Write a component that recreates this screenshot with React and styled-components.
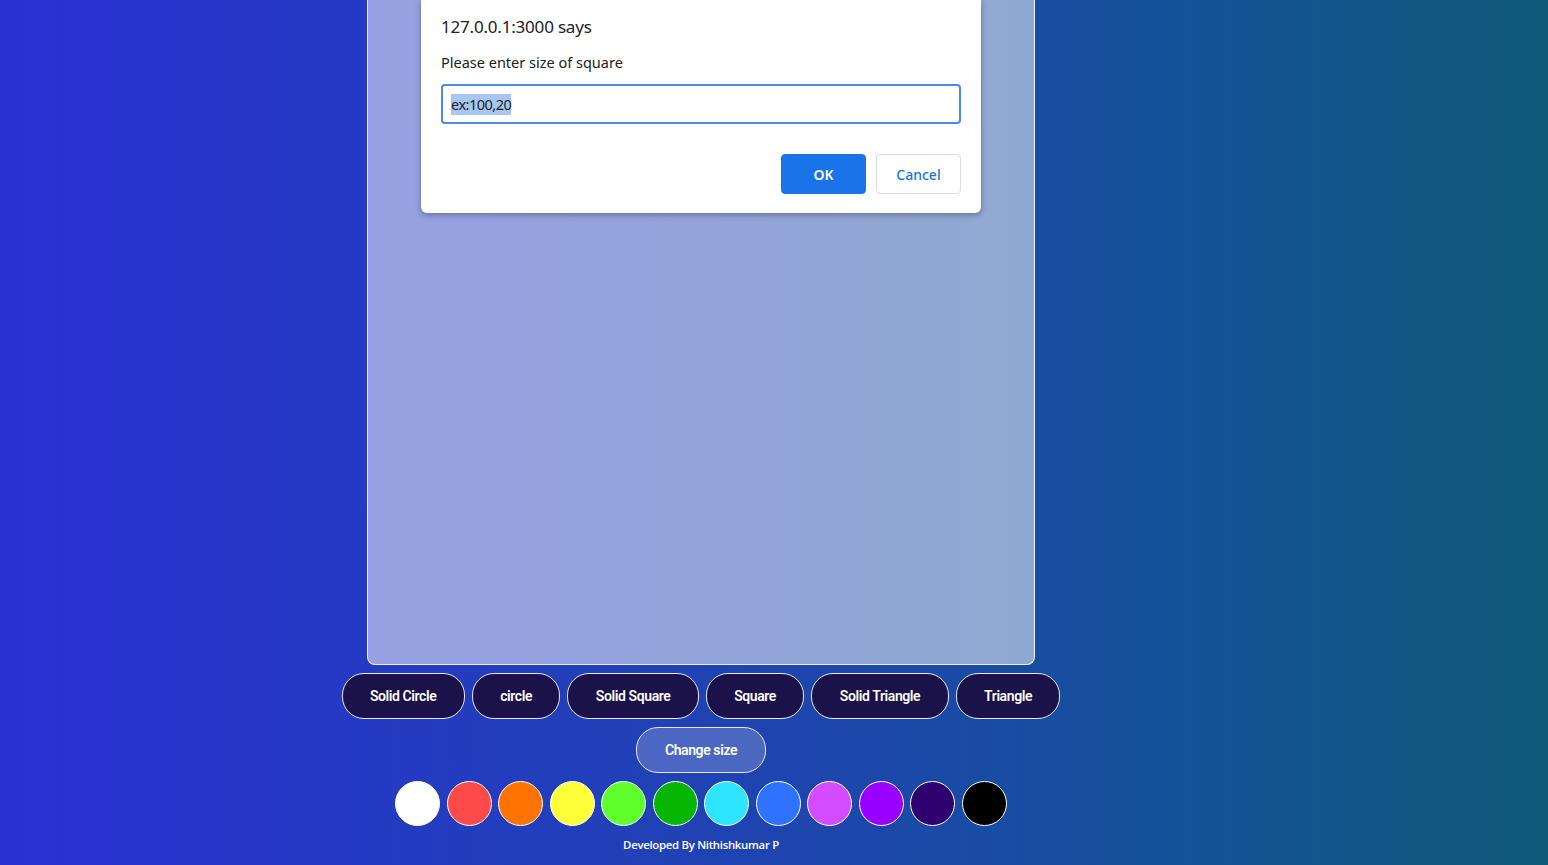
import React from "react"
import styled, { createGlobalStyle } from "styled-components"

const GlobalStyle = createGlobalStyle`
  html, body {
    margin: 0;
    padding: 0;
  }
  body {
    font-family: "Noto Sans", "Open Sans", sans-serif;
    overflow: hidden;
  }
`

const shapes = [
  "Solid Circle",
  "circle",
  "Solid Square",
  "Square",
  "Solid Triangle",
  "Triangle",
]

const colors = [
  "#ffffff",
  "#ff4a4a",
  "#ff7300",
  "#ffff3a",
  "#5fff2e",
  "#06b600",
  "#2de5ff",
  "#2f72ff",
  "#d44cff",
  "#9800ff",
  "#2f0070",
  "#000000",
]

const App = () => {
  return (
    <Page>
      <GlobalStyle />
      <Main>
        <Canvas />
        <ShapeRow>
          {shapes.map((s) => (
            <ShapeButton key={s}>{s}</ShapeButton>
          ))}
        </ShapeRow>
        <ShapeButton $ghost>Change size</ShapeButton>
        <Palette>
          {colors.map((c) => (
            <Swatch key={c} $color={c} />
          ))}
        </Palette>
        <Footer>Developed By Nithishkumar P</Footer>
      </Main>

      <Dialog>
        <DialogTitle>127.0.0.1:3000 says</DialogTitle>
        <DialogText>Please enter size of square</DialogText>
        <PromptInput>
          <Selected>ex:100,20</Selected>
        </PromptInput>
        <DialogActions>
          <DialogButton $primary>OK</DialogButton>
          <DialogButton>Cancel</DialogButton>
        </DialogActions>
      </Dialog>
    </Page>
  )
}

export default App

const Page = styled.div`
  position: relative;
  width: 100vw;
  height: 865px;
  background: linear-gradient(90deg, #2a31d4 0%, #2042b4 45%, #15519a 75%, #0f5a78 100%);
  overflow: hidden;
  padding-right: 146px;
  box-sizing: border-box;
`

const Main = styled.div`
  display: flex;
  flex-direction: column;
  align-items: center;
  gap: 8px;
`

const Canvas = styled.div`
  width: 668px;
  height: 665px;
  box-sizing: border-box;
  background: rgba(255, 255, 255, 0.52);
  border: 1px solid rgba(255, 255, 255, 0.85);
  border-top: none;
  border-radius: 0 0 8px 8px;
`

const ShapeRow = styled.div`
  display: flex;
  gap: 7px;
`

const ShapeButton = styled.button`
  height: 46px;
  padding: 0 27.4px;
  border-radius: 22px;
  border: 1px solid #e6e8f5;
  background: ${(p) => (p.$ghost ? "rgba(255, 255, 255, 0.2)" : "#1a1248")};
  color: #ffffff;
  font-family: Roboto, "Liberation Sans", sans-serif;
  font-weight: 600;
  font-size: 14px;
  letter-spacing: -0.4px;
  cursor: pointer;
`

const Palette = styled.div`
  display: flex;
  gap: 6.5px;
`

const Swatch = styled.div`
  width: 45px;
  height: 45px;
  box-sizing: border-box;
  border-radius: 50%;
  border: 1px solid #ffffff;
  background: ${(p) => p.$color};
`

const Footer = styled.div`
  margin-top: 3px;
  color: #ffffff;
  font-family: "Open Sans", "Noto Sans", sans-serif;
  font-size: 11.4px;
  font-weight: 600;
  letter-spacing: -0.3px;
`

const Dialog = styled.div`
  position: absolute;
  top: 0;
  left: 421px;
  width: 560px;
  height: 213px;
  box-sizing: border-box;
  background: #ffffff;
  border-radius: 0 0 6px 6px;
  box-shadow: 0 2px 6px rgba(0, 0, 0, 0.3);
  padding: 15px 20px 0 20px;
  display: flex;
  flex-direction: column;
`

const DialogTitle = styled.div`
  font-size: 17px;
  color: #202124;
  letter-spacing: -0.2px;
`

const DialogText = styled.div`
  margin-top: 14px;
  font-size: 14.5px;
  color: #202124;
`

const PromptInput = styled.div`
  margin-top: 12px;
  height: 40px;
  box-sizing: border-box;
  border: 2px solid #4a8ae6;
  border-radius: 4px;
  display: flex;
  align-items: center;
  padding-left: 8px;
`

const Selected = styled.span`
  background: #a8c7f0;
  color: #202124;
  font-family: "Noto Sans", sans-serif;
  font-size: 14.5px;
  letter-spacing: -0.5px;
  line-height: 21px;
`

const DialogActions = styled.div`
  margin-top: 30px;
  display: flex;
  justify-content: flex-end;
  gap: 10px;
`

const DialogButton = styled.button`
  width: 85px;
  height: 40px;
  border-radius: 4px;
  border: 1px solid ${(p) => (p.$primary ? "#1a73e8" : "#dadce0")};
  background: ${(p) => (p.$primary ? "#1a73e8" : "#ffffff")};
  color: ${(p) => (p.$primary ? "#ffffff" : "#1a73e8")};
  font-family: "Noto Sans", sans-serif;
  font-size: 14px;
  font-weight: ${(p) => (p.$primary ? 600 : 500)};
`
